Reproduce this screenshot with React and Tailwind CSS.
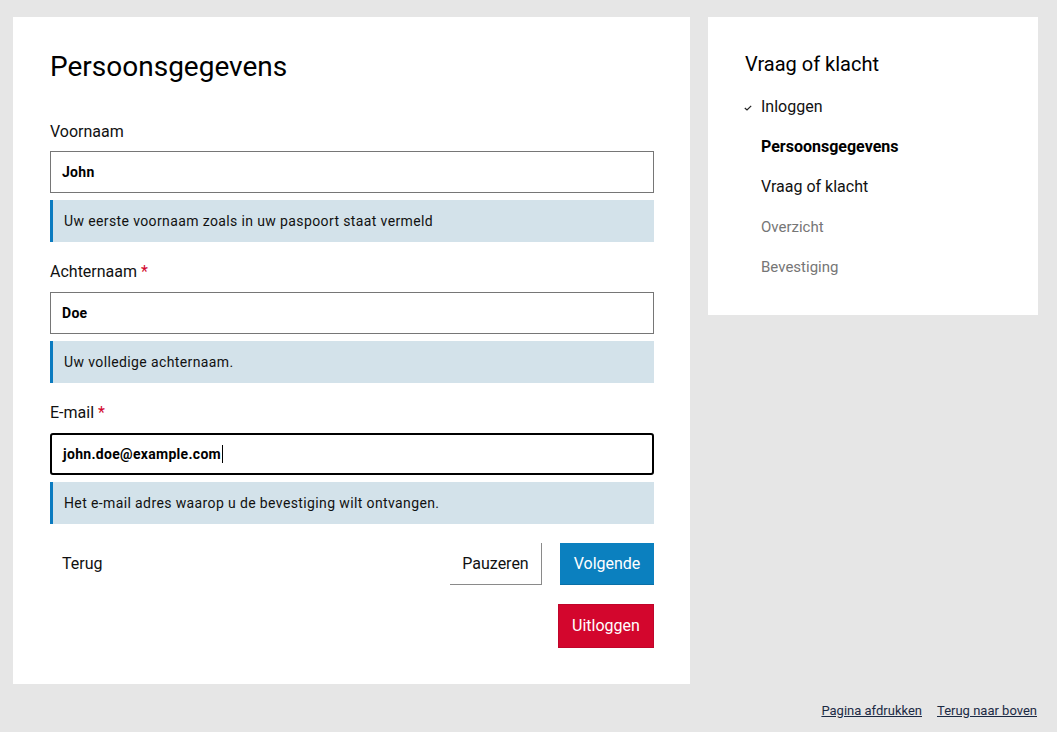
import React from "react";

const font = { fontFamily: "Roboto, 'Noto Sans', sans-serif" };

function Field({ label, required, value, help, focused, first }) {
  return (
    <div className={first ? "mt-[36px]" : "mt-[18px]"}>
      <div className={`text-[16px] leading-[24px] text-[#111] ${first ? "mb-[7px]" : "mb-2"}`}>
        {label}
        {required && <span className="text-[#d2072d]"> *</span>}
      </div>
      <div
        className={`flex items-center h-[42px] px-[11px] text-[14px] font-bold tracking-[0.3px] text-black bg-white ${
          focused ? "border-2 border-black rounded-[3px] px-[10px]" : "border border-[#767676]"
        }`}
      >
        <span>{value}</span>
        {focused && <span className="inline-block w-px h-[18px] bg-black ml-px" />}
      </div>
      <div className="mt-[7px] h-[42px] flex items-center bg-[#d3e2ea] border-l-[3px] border-[#0b7bc0] pl-[11px] text-[14px] tracking-[0.38px] text-[#111]">
        {help}
      </div>
    </div>
  );
}

function Check() {
  return (
    <svg width="8" height="6" viewBox="0 0 8 6" className="absolute -left-[17px] top-[10px]">
      <path d="M0.8 3 L3 5 L7.2 0.8" fill="none" stroke="#222" strokeWidth="1.2" />
    </svg>
  );
}

export default function App() {
  return (
    <div className="min-h-screen bg-[#e6e6e6] pt-[17px] pl-[13px]" style={font}>
      <div className="flex items-start gap-[18px]">
        <main className="w-[677px] bg-white pt-[33px] pb-[36px] pl-[37px] pr-[36px]">
          <h1 className="text-[28px] leading-[34px] text-black">Persoonsgegevens</h1>
          <Field first label="Voornaam" value="John" help="Uw eerste voornaam zoals in uw paspoort staat vermeld" />
          <Field label="Achternaam" required value="Doe" help="Uw volledige achternaam." />
          <Field
            label="E-mail"
            required
            focused
            value="john.doe@example.com"
            help="Het e-mail adres waarop u de bevestiging wilt ontvangen."
          />
          <div className="mt-[19px] flex items-center justify-between">
            <button className="h-[42px] px-3 text-[16px] text-[#111]">Terug</button>
            <div className="flex gap-[18px]">
              <button className="h-[42px] w-[92px] bg-white border-r border-b border-[#8a8a8a] text-[16px] text-[#111]">
                Pauzeren
              </button>
              <button className="h-[42px] w-[94px] bg-[#0b80bf] border-b border-[#0a6fa6] text-[16px] text-white">
                Volgende
              </button>
            </div>
          </div>
          <div className="mt-[19px] flex justify-end">
            <button className="h-[44px] w-[96px] bg-[#d3062d] border border-[#c0052a] text-[16px] text-white">
              Uitloggen
            </button>
          </div>
        </main>
        <aside className="w-[330px] bg-white pt-[33px] pb-[36px] pl-[37px]">
          <h2 className="text-[20px] leading-[28px] text-black">Vraag of klacht</h2>
          <ul className="mt-[17px] pl-[16px] flex flex-col gap-[16px]">
            <li className="relative text-[16px] leading-[24px] text-[#111]">
              <Check />
              Inloggen
            </li>
            <li className="text-[16px] leading-[24px] font-bold text-black">Persoonsgegevens</li>
            <li className="text-[16px] leading-[24px] text-[#111]">Vraag of klacht</li>
            <li className="text-[15px] leading-[24px] text-[#767676]">Overzicht</li>
            <li className="text-[15px] leading-[24px] text-[#767676]">Bevestiging</li>
          </ul>
        </aside>
      </div>
      <div className="flex justify-end gap-[15px] pr-[20px] mt-[19px] text-[13px] leading-[16px] text-[#1b2a44]">
        <a href="#" className="underline">Pagina afdrukken</a>
        <a href="#" className="underline">Terug naar boven</a>
      </div>
    </div>
  );
}
